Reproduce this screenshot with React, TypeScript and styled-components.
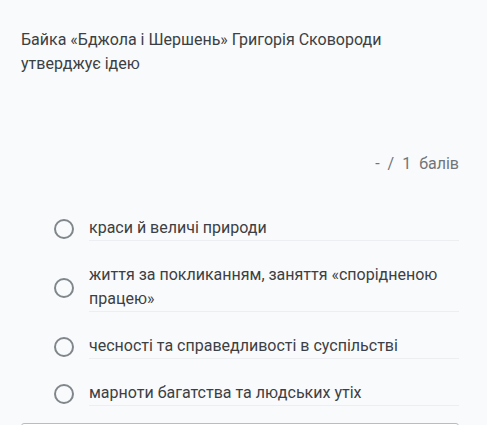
import React from "react";
import styled, { createGlobalStyle } from "styled-components";

const Global = createGlobalStyle`
  html, body { margin: 0; padding: 0; background: #f9fafb; }
  body { font-family: Roboto, "Noto Sans", sans-serif; overflow: hidden; }
`;

const Page = styled.div`
  padding: 28px 28px 0 21px;
  color: #3c4043;
`;

const Question = styled.div`
  font-size: 16px;
  line-height: 24px;
  margin: 0;
`;

const Points = styled.div`
  margin-top: 76px;
  display: flex;
  justify-content: flex-end;
  font-size: 16px;
  line-height: 24px;
  color: #70757a;
  gap: 8px;
`;

const Options = styled.div`
  margin-top: 40px;
  padding-left: 33px;
  display: flex;
  flex-direction: column;
  gap: 22px;
`;

const Option = styled.label`
  display: flex;
  align-items: center;
  gap: 15px;
`;

const Radio = styled.span`
  flex: none;
  width: 16px;
  height: 16px;
  border: 2px solid #80868b;
  border-radius: 50%;
`;

const Label = styled.span`
  flex: 1;
  font-size: 16px;
  line-height: 24px;
  border-bottom: 1px solid #eceef1;
`;

const NextBox = styled.div`
  margin-top: 17px;
  height: 40px;
  border: 1px solid #b9bcc0;
  border-radius: 3px 3px 0 0;
  background: #ffffff;
`;

const options = [
  "краси й величі природи",
  "життя за покликанням, заняття «спорідненою працею»",
  "чесності та справедливості в суспільстві",
  "марноти багатства та людських утіх",
];

export default function App() {
  return (
    <>
      <Global />
      <Page>
        <Question>Байка «Бджола і Шершень» Григорія Сковороди утверджує ідею</Question>
        <Points>
          <span>-</span>
          <span>/</span>
          <span>1</span>
          <span>балів</span>
        </Points>
        <Options>
          {options.map((o) => (
            <Option key={o}>
              <Radio />
              <Label>{o}</Label>
            </Option>
          ))}
        </Options>
        <NextBox />
      </Page>
    </>
  );
}
